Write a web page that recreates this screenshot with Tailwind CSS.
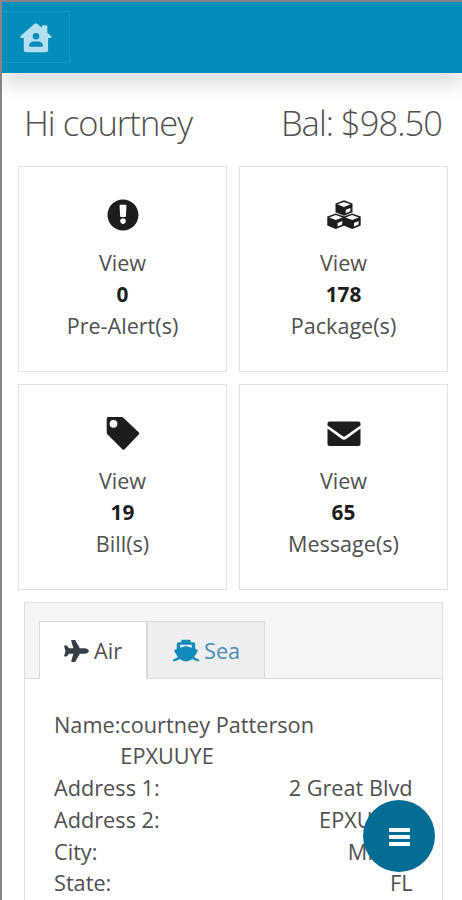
<!DOCTYPE html>
<html lang="en">
  <head>
    <meta charset="UTF-8" />
    <meta name="viewport" content="width=device-width, initial-scale=1.0" />
    <title>Dashboard</title>
    <script src="https://cdn.jsdelivr.net/npm/@tailwindcss/browser@4"></script>
  </head>
  <body class="h-[900px] overflow-hidden border-t-2 border-l-2 border-[#858585] bg-white font-['Open_Sans',sans-serif] text-[#505050]">
    <header class="flex h-[70.5px] items-center bg-[#028dbc] shadow-[0_12px_18px_rgba(0,0,0,0.13)]">
      <button class="flex h-[52px] w-[68px] items-center justify-center border border-l-0 border-[#1197c2] pt-[2px]">
        <svg class="h-8 w-8 text-[#b3dff0]" viewBox="0 0 32 32" fill="currentColor">
          <path fill-rule="evenodd" d="M14.5 1.7q1.300-1.100 2.600 0l4.700 4.100V4.500q0-1.300 1.300-1.300H26q1.300 0 1.300 1.300v6.200l3.800 3.200q.8.9.2 1.700-.4.5-1.200.5h-2v11.800q0 2.300-2.300 2.300H6.100q-2.300 0-2.300-2.300V16.100H1.700q-.9 0-1.200-.6-.5-.9.3-1.700ZM16 11a3.300 3.300 0 1 0 0 6.600 3.300 3.300 0 0 0 0-6.600Zm-2.300 8.400c-2.800 0-4.600 2.200-4.600 4.400 0 .6.4 1 1 1h11.800c.6 0 1-.4 1-1 0-2.200-1.800-4.400-4.600-4.400Z" />
        </svg>
      </button>
    </header>

    <div class="flex justify-between pt-[25px] pr-5 pl-[22px] text-[34.5px] leading-[50px] font-light tracking-[-0.95px]">
      <h1>Hi courtney</h1>
      <h1>Bal: $98.50</h1>
    </div>

    <div class="mt-[18.500px] mr-[14px] ml-4 grid grid-cols-2 gap-x-3 gap-y-3 text-center text-[21.600px] leading-[31.700px]">
      <a class="flex h-[206px] flex-col items-center border-[1.5px] border-[#e2e2e2] pt-8">
        <svg class="mb-4 h-8 w-8 text-[#1d1d1d]" viewBox="0 0 512 512" fill="currentColor"><path d="M504 256c0 137-111 248-248 248S8 393 8 256C8 119 119 8 256 8s248 111 248 248zm-248 50c-25.400 0-46 20.600-46 46s20.600 46 46 46 46-20.600 46-46-20.600-46-46-46zm-55-200l9 171c.4 6.300 5.600 11.300 12 11.300h68c6.400 0 11.600-5 12-11.300l9-171c.4-6.900-5.100-12.700-12-12.700h-86c-6.900 0-12.400 5.800-12 12.700z" /></svg>
        <span>View</span>
        <span class="text-[20.800px] font-bold text-[#1d1d1d]">0</span>
        <span>Pre-Alert(s)</span>
      </a>

      <a class="flex h-[206px] flex-col items-center border-[1.5px] border-[#e2e2e2] pt-8">
        <svg class="mb-4 h-8 w-[34px] text-[#1d1d1d]" viewBox="0 0 34 32">
          <g id="cube">
            <path fill="currentColor" d="M17 1.300 25.500 4.400V13.200L17 16.800 8.500 13.200V4.400Z" />
            <path fill="white" d="m17 2.900 6.600 2.400L17 7.900l-6.600-2.600ZM18.800 10.800l4.600-1.900v3.300l-4.600 2Z" />
          </g>
          <use href="#cube" x="-8.200" y="13.200" />
          <use href="#cube" x="8.200" y="13.200" />
        </svg>
        <span>View</span>
        <span class="text-[20.800px] font-bold text-[#1d1d1d]">178</span>
        <span>Package(s)</span>
      </a>

      <a class="flex h-[206px] flex-col items-center border-[1.5px] border-[#e2e2e2] pt-8">
        <svg class="mb-4 h-8 w-[34px] overflow-visible text-[#1d1d1d]" viewBox="0 0 34 32" fill="currentColor">
          <path fill-rule="evenodd" d="M2.200 0h13.200q1.300 0 2.200.9L32.900 15.400q1 .9 0 1.900L18.700 32.200q-1.200 1.100-2.400 0L1.600 17.600q-.9-.9-.9-2.200V1.500Q.7 0 2.200 0ZM7.500 2.900a3.900 3.900 0 1 0 0 7.800 3.900 3.900 0 0 0 0-7.800Z" />
        </svg>
        <span>View</span>
        <span class="text-[20.800px] font-bold text-[#1d1d1d]">19</span>
        <span>Bill(s)</span>
      </a>

      <a class="flex h-[206px] flex-col items-center border-[1.5px] border-[#e2e2e2] pt-8">
        <svg class="mb-4 h-8 w-[34px] text-[#1d1d1d]" viewBox="0 0 34 32" fill="currentColor">
          <path d="M2.500 4.500h29q2 0 2 2v2.100L18.500 19q-1.500 1-3 0L.5 8.600V6.500q0-2 2-2Z" />
          <path d="M.5 11.600 14.500 21.800q2.500 1.800 5 0L33.500 11.600V27q0 2-2 2h-29q-2 0-2-2Z" />
        </svg>
        <span>View</span>
        <span class="text-[20.800px] font-bold text-[#1d1d1d]">65</span>
        <span>Message(s)</span>
      </a>
    </div>

    <div class="mt-3 mr-[19px] ml-[22px] h-[320px] border-[1.5px] border-[#dfdfdf] text-[21.700px] leading-[31.800px]">
      <div class="flex h-[76px] items-end border-b border-[#dadada] bg-[#f5f5f5] pl-[14px]">
        <a class="-mb-px flex h-[58px] w-[108px] items-center gap-[5px] border border-b-0 border-[#dadada] bg-white pl-[24px]">
          <svg class="h-[22px] w-[25px] text-[#353e47]" viewBox="0 0 576 512" fill="currentColor"><path d="M480 192H365.700L260.600 8.100A16 16 0 0 0 246.700 0h-65.500c-10.600 0-18.300 10.200-15.400 20.400L214.900 192H112l-43.200-57.600c-3-4-7.800-6.400-12.800-6.400H16c-10.400 0-18 9.800-15.500 19.900L32 256 .5 364.100C-2 374.200 5.600 384 16 384h40c5 0 9.800-2.400 12.800-6.400L112 320h102.900l-49 171.600c-3 10.200 4.700 20.400 15.300 20.400h65.500c5.700 0 11-3.100 13.900-8.100L365.700 320H480c35.300 0 96-28.700 96-64s-60.700-64-96-64z" /></svg>
          <span>Air</span>
        </a>
        <a class="-mb-px flex h-[58px] w-[118px] items-center gap-1 border border-[#dadada] bg-[#eee] pt-px pl-[24px] text-[#468db5]">
          <svg class="h-6 w-7 text-[#128bbb]" viewBox="0 0 28 24" fill="currentColor">
            <path fill-rule="evenodd" d="M10.500.7h7q1.200 0 1.200 1.200v1.400h2.500q2 0 2 2v4.500l1.600.6q1.500.7.7 2l-3.300 5.700q1.600 1.600 4 2.100 1 .2 1 1.200t-1.200.9q-3.400-.4-5.500-2.200-3 2.300-6.500 2.300t-6.500-2.300Q5.400 21.900 2 22.300q-1.200.1-1.200-.9T1.800 20.200q2.400-.5 4-2.100L2.500 12.400q-.8-1.300.7-2l1.600-.6V5.300q0-2 2-2h2.500V1.900q0-1.200 1.200-1.200ZM8.200 5.700v3L14 6.900l5.800 1.800V5.700Z" />
          </svg>
          <span>Sea</span>
        </a>
      </div>

      <div class="pt-[29.500px] pr-[29.500px] pl-[29px]">
        <div class="flex">
          <span>Name:</span>
          <span>courtney Patterson<br />EPXUUYE</span>
        </div>
        <div class="flex justify-between">
          <span>Address 1:</span>
          <span>2 Great Blvd</span>
        </div>
        <div class="flex justify-between">
          <span>Address 2:</span>
          <span>EPXUUYE</span>
        </div>
        <div class="flex justify-between">
          <span>City:</span>
          <span>MIAMI</span>
        </div>
        <div class="flex justify-between">
          <span>State:</span>
          <span>FL</span>
        </div>
      </div>
    </div>

    <button class="fixed top-[800px] left-[363px] flex h-[72px] w-[72px] flex-col items-center justify-center gap-[3px] rounded-full bg-[#036d95] pt-[2px]">
      <span class="h-[4px] w-[21px] bg-white"></span>
      <span class="h-[4px] w-[21px] bg-white"></span>
      <span class="h-[4px] w-[21px] bg-white"></span>
    </button>
  </body>
</html>
